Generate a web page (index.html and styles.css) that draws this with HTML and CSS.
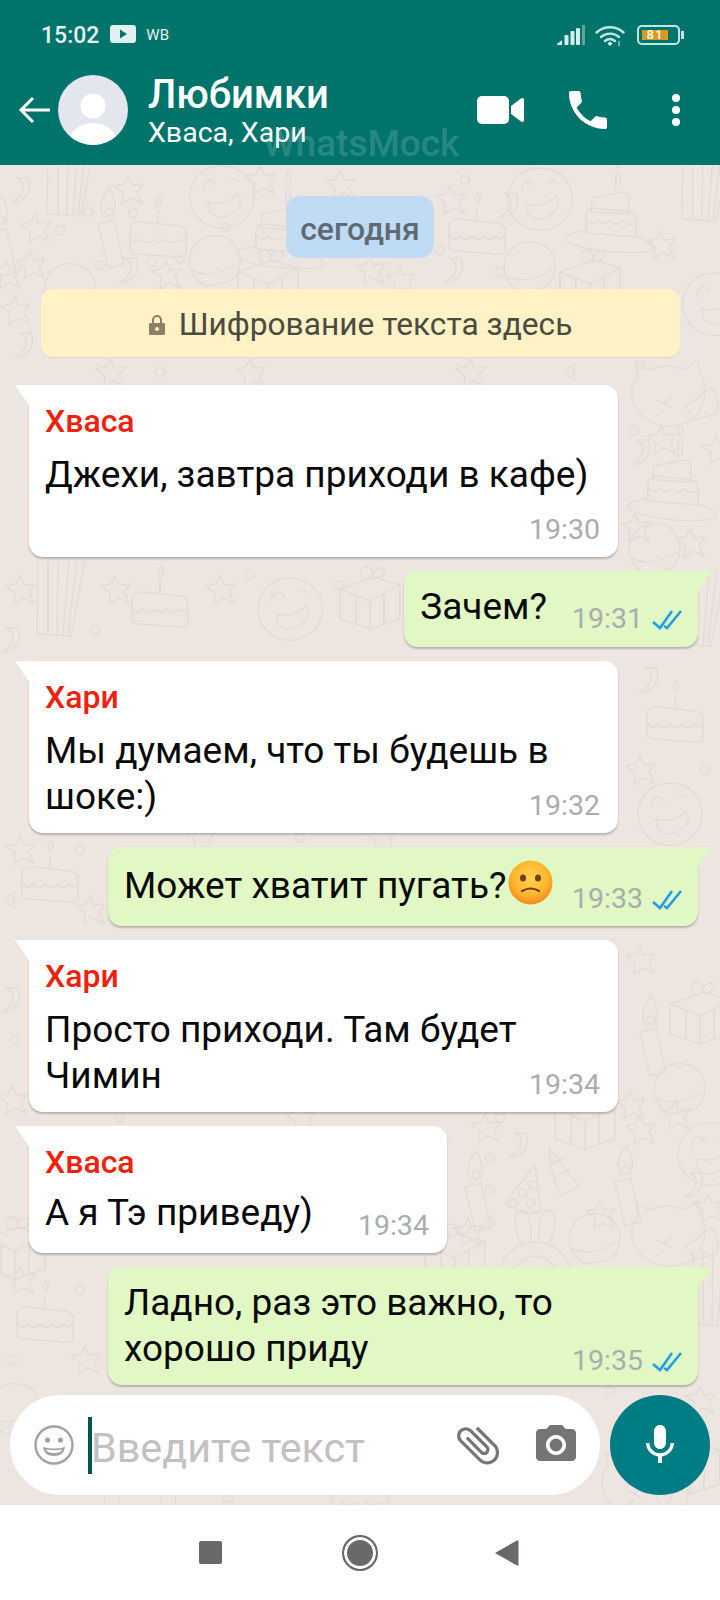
FILE: index.html
```html
<!DOCTYPE html>
<html lang="en">
<head>
    <meta charset="UTF-8">
    <meta name="viewport" content="width=device-width, initial-scale=1.0">
    <title>Любимки</title>
    <link rel="stylesheet" href="styles.css">
</head>
<body>

<div class="phone">
    <!-- Header -->
    <header class="header">
        <div class="statusbar">
            <span class="clock">15:02</span>
            <svg class="st-play" width="26" height="18" viewBox="0 0 26 18"><rect width="26" height="18" rx="3" fill="#e2f1f0"/><path d="M10 4.500l7 4.500-7 4.500z" fill="#00736b"/></svg>
            <span class="st-wb">WB</span>
            <span class="st-space"></span>
            <svg class="st-signal" width="28" height="20" viewBox="0 0 28 20"><g fill="#d5eeec"><path d="M0 19l5-4v5H0z"/><rect x="7.500" y="10" width="4" height="10" rx="1"/><rect x="13.500" y="6" width="4" height="14" rx="1"/><rect x="19" y="3" width="4" height="17" rx="1"/></g><rect x="25" y="0" width="3" height="20" fill="#57a6a0"/></svg>
            <svg class="st-wifi" width="30" height="22" viewBox="0 0 30 22"><g fill="none" stroke="#bfe6e3" stroke-width="2.400" stroke-linecap="round"><path d="M1.500 7.500C9 .5 21 .5 28.500 7.500"/><path d="M6 12c5.200-4.500 12.800-4.500 18 0"/><path d="M10 16c3-2.300 7-2.300 10 0"/></g><path d="M12.500 18.500l2.500-2 2.500 2-2.500 2.500z" fill="#e2f1f0"/><path d="M24 16v5" stroke="#8fcdc8" stroke-width="1.500"/></svg>
            <div class="battery">
                <div class="battery-body"><span class="battery-fill">81</span></div>
                <span class="battery-nub"></span>
            </div>
        </div>
        <div class="appbar">
            <svg class="back" width="32" height="32" viewBox="0 0 32 32"><path d="M32 16H3M15 4L3 16l12 12" fill="none" stroke="#fff" stroke-width="3"/></svg>
            <svg class="avatar" width="70" height="70" viewBox="0 0 70 70">
                <defs><clipPath id="av"><circle cx="35" cy="35" r="35"/></clipPath></defs>
                <circle cx="35" cy="35" r="35" fill="#e3e6ec"/>
                <circle cx="35" cy="31" r="12.500" fill="#fff"/>
                <ellipse cx="35" cy="68" rx="24" ry="20" fill="#fff" clip-path="url(#av)"/>
            </svg>
            <div class="chat-title">
                <div class="group-name">Любимки</div>
                <div class="group-members">Хваса, Хари</div>
            </div>
            <svg class="ic-video" width="47" height="28" viewBox="0 0 47 28"><rect width="32" height="28" rx="5" fill="#fff"/><path d="M34 10l10-7.500c1.500-1 3-.5 3 1.500v20c0 2-1.500 2.500-3 1.500L34 18z" fill="#fff"/></svg>
            <svg class="ic-call" width="38" height="38" viewBox="3 3 18 18"><path fill="#fff" d="M6.620 10.790c1.440 2.830 3.760 5.140 6.590 6.590l2.200-2.200c.27-.27.67-.36 1.020-.24 1.120.37 2.330.57 3.570.57.550 0 1 .45 1 1V20c0 .55-.45 1-1 1-9.390 0-17-7.610-17-17 0-.55.45-1 1-1h3.500c.55 0 1 .45 1 1 0 1.250.2 2.450.57 3.570.11.35.03.74-.25 1.020l-2.200 2.200z"/></svg>
            <div class="ic-more"><i></i><i></i><i></i></div>
        </div>
        <div class="watermark">WhatsMock</div>
    </header>

    <!-- Chat -->
    <main class="chat">
        <svg class="wallpaper" width="720" height="1340" viewBox="0 165 720 1340">
            <defs>
                <g id="cake"><path d="M-28 -8q4 -6 10 -5l38 4q8 1 8 8v18q0 6 -6 5l-44 -3q-6 0 -6 -6zM-28 3q6 8 11 1 6 7 12 0 6 7 12 0 6 7 12 0 6 6 9 -2M0 -12v-12M0 -28q-4 -5 1 -11 5 6 -1 11"/></g>
                <g id="hatcake"><path d="M-18 -24l30 -6q6 0 7 6v16l-38 -2zM-24 -8q2 -6 6 -6l38 4q6 1 6 7v18l-50 -4zM-24 -2q6 6 12 0 6 7 12 1 6 6 12 0 6 6 14 2M-24 8q-22 4 -20 10 8 8 46 12 40 2 42 -4 0 -6 -18 -12M6 -32v-14q0 -4 2 -4 2 0 2 4v12M8 -54q-5 -5 0 -12 6 7 0 12"/></g>
                <g id="gift"><path d="M-30 -16l34 -12 26 8v34l-30 10 -30 -10zM-30 -16l30 12 30 -16M0 -4v30M-14 -10v30M14 -11v30M-6 -26q-8 -12 4 -12 6 2 4 10 4 -12 12 -8 4 6 -10 10"/></g>
                <g id="stripes"><path d="M-22 -50l-1 74 34 2 14 -76M-12 -50v74M-2 -50l-1 74M9 -50l-6 74M17 -50l-9 74"/></g>
                <g id="candle"><path d="M-10 -8l16 -4 10 44 -16 4zM-3 -14q-10 -12 4 -30 10 14 4 28M-3 -20a4 4 0 1 0 8 0 4 4 0 1 0 -8 0"/></g>
                <g id="star"><path d="M0 -14l4 9 11 -1 -6 8 5 11 -11 -5 -9 6 1 -11 -9 -7 10 -2z"/></g>
                <g id="ring"><circle r="4.500"/></g>
                <g id="confetti"><path d="M-6 -12q10 4 6 14 -2 6 -10 10 6 2 14 -6 6 -8 2 -18z"/></g>
                <g id="face"><path d="M0 -32c22 0 34 18 32 34 -2 20 -20 30 -36 28 -18 -2 -30 -18 -28 -34 2 -16 14 -28 32 -28zM-18 -8q-2 -8 6 -10 6 0 6 6M8 -18q6 -4 10 2M-14 4q20 4 30 -8 6 10 -4 18 -14 10 -24 0z"/></g>
                <g id="burger"><path d="M-26 2c0 -24 18 -30 30 -28 16 2 24 16 20 32q-4 12 -12 14l-20 4q-14 -4 -18 -22zM-24 8q20 10 46 -6"/></g>
                <g id="cat"><path d="M-32 -24l-2 -12 14 6q18 -8 34 0l14 -10 2 14c10 16 4 44 -18 50 -24 8 -48 -8 -50 -28q-2 -10 6 -20zM-14 0l10 4M-14 16l8 -6M2 -4l-8 8 8 4M16 6l24 -18q12 6 6 26l-22 6z"/></g>
                <g id="bunny"><path d="M-36 30c0 -24 16 -38 36 -38s36 14 36 38M-14 -6c-8 -16 -8 -30 0 -34 10 0 10 18 10 32M14 -6c8 -16 8 -30 0 -34 -10 0 -10 18 -10 32M-22 30c0 -14 10 -24 22 -24s22 10 22 24"/></g>
                <g id="party"><path d="M0 -30l-30 38q16 14 36 8zM-12 -6a4 4 0 1 0 .1 0M-2 -14a4 4 0 1 0 .1 0M-4 4a4 4 0 1 0 .1 0M-22 4a4 4 0 1 0 .1 0"/></g>
                <g id="partyhat"><path d="M-16 -22l30 38 -18 10q-10 -18 -12 -48zM-16 -6l16 -6M-12 8l18 -10"/></g>
            </defs>
            <g fill="none" stroke="#e4dbd5" stroke-width="1.400">
                <use href="#stripes" x="70" y="190"/><use href="#star" x="128" y="190"/><use href="#star" x="35" y="228"/><use href="#star" x="30" y="265"/><use href="#star" x="6" y="275"/>
                <use href="#confetti" x="22" y="190"/><use href="#candle" x="108" y="232"/><use href="#cake" x="158" y="235"/><use href="#face" x="222" y="198"/>
                <use href="#hatcake" x="280" y="238"/><use href="#burger" x="215" y="262"/><use href="#gift" x="268" y="288"/><use href="#confetti" x="130" y="270"/><use href="#star" x="166" y="275"/>
                <use href="#burger" x="70" y="290"/><use href="#ring" x="60" y="230"/><use href="#ring" x="100" y="265"/><use href="#ring" x="152" y="262"/><use href="#ring" x="180" y="258"/><use href="#ring" x="225" y="227"/><use href="#ring" x="88" y="212"/><use href="#ring" x="133" y="213"/>
                <use href="#candle" x="0" y="240"/><use href="#star" x="260" y="180"/>
                <use href="#star" x="340" y="185"/><use href="#cake" x="477" y="232"/><use href="#face" x="540" y="200"/><use href="#hatcake" x="610" y="222"/><use href="#gift" x="590" y="288"/><use href="#stripes" x="705" y="195"/><use href="#burger" x="530" y="268"/>
                <use href="#star" x="450" y="200"/><use href="#star" x="660" y="245"/><use href="#face" x="715" y="305"/><use href="#ring" x="440" y="250"/><use href="#ring" x="500" y="272"/><use href="#confetti" x="455" y="270"/><use href="#confetti" x="510" y="205"/><use href="#star" x="400" y="280"/><use href="#star" x="370" y="270"/><use href="#ring" x="465" y="180"/>
                <use href="#confetti" x="25" y="345"/><use href="#star" x="15" y="310"/><use href="#star" x="110" y="373"/><use href="#star" x="250" y="373"/><use href="#star" x="470" y="373"/><use href="#ring" x="160" y="372"/><use href="#ring" x="570" y="372"/><use href="#ring" x="640" y="365"/>
                <use href="#cat" x="670" y="400"/><use href="#star" x="661" y="440"/><use href="#confetti" x="642" y="452"/><use href="#hatcake" x="672" y="490"/><use href="#ring" x="634" y="430"/><use href="#star" x="635" y="528"/><use href="#burger" x="655" y="550"/><use href="#star" x="690" y="543"/><use href="#star" x="716" y="450"/>
                <use href="#stripes" x="700" y="620"/><use href="#gift" x="370" y="605"/><use href="#stripes" x="60" y="610"/><use href="#face" x="290" y="610"/><use href="#cake" x="160" y="605"/><use href="#star" x="115" y="590"/><use href="#star" x="220" y="590"/><use href="#star" x="20" y="590"/><use href="#ring" x="340" y="585"/><use href="#ring" x="95" y="630"/><use href="#ring" x="250" y="575"/>
                <use href="#confetti" x="650" y="680"/><use href="#cake" x="675" y="720"/><use href="#star" x="640" y="770"/><use href="#ring" x="705" y="770"/><use href="#face" x="670" y="815"/><use href="#confetti" x="12" y="640"/>
                <use href="#cake" x="50" y="880"/><use href="#star" x="20" y="850"/><use href="#star" x="90" y="910"/><use href="#ring" x="10" y="900"/><use href="#ring" x="80" y="850"/><use href="#star" x="380" y="838"/><use href="#star" x="200" y="838"/><use href="#ring" x="300" y="838"/>
                <use href="#star" x="640" y="960"/><use href="#gift" x="700" y="1020"/><use href="#candle" x="650" y="1040"/><use href="#burger" x="680" y="1090"/><use href="#star" x="630" y="1105"/>
                <use href="#confetti" x="12" y="1000"/><use href="#star" x="12" y="1100"/><use href="#ring" x="15" y="1040"/><use href="#star" x="300" y="1118"/><use href="#ring" x="120" y="1118"/><use href="#ring" x="500" y="1118"/>
                <use href="#candle" x="475" y="1195"/><use href="#confetti" x="520" y="1145"/><use href="#partyhat" x="565" y="1170"/><use href="#party" x="535" y="1195"/><use href="#gift" x="585" y="1125"/><use href="#candle" x="625" y="1190"/><use href="#star" x="485" y="1128"/><use href="#star" x="640" y="1130"/><use href="#star" x="675" y="1115"/><use href="#confetti" x="695" y="1185"/><use href="#face" x="710" y="1155"/><use href="#star" x="600" y="1215"/><use href="#ring" x="490" y="1158"/><use href="#star" x="708" y="1208"/><use href="#ring" x="490" y="1190"/>
                <use href="#bunny" x="535" y="1250"/><use href="#burger" x="595" y="1240"/><use href="#cat" x="670" y="1240"/><use href="#star" x="468" y="1232"/><use href="#ring" x="490" y="1223"/><use href="#gift" x="455" y="1262"/>
                <use href="#cake" x="45" y="1320"/><use href="#star" x="20" y="1280"/><use href="#ring" x="80" y="1290"/><use href="#star" x="85" y="1360"/><use href="#stripes" x="715" y="1300"/><use href="#gift" x="15" y="1255"/><use href="#ring" x="12" y="1360"/>
                <use href="#burger" x="15" y="1410"/><use href="#bunny" x="140" y="1475"/><use href="#cat" x="640" y="1490"/><use href="#gift" x="690" y="1470"/><use href="#star" x="700" y="1400"/><use href="#cake" x="360" y="1498"/><use href="#ring" x="228" y="1498"/><use href="#ring" x="610" y="1390"/>
            </g>
        </svg>

        <div class="messages">
            <div class="date-pill">сегодня</div>
            <div class="notice">
                <svg width="16" height="20" viewBox="0 0 16 20"><path fill="#8a7f68" d="M3 8V5a5 5 0 0 1 10 0v3h1.500c.8 0 1.500.7 1.500 1.500v9c0 .8-.7 1.500-1.500 1.500h-13C.7 20 0 19.300 0 18.500v-9C0 8.700.7 8 1.500 8zm2 0h6V5a3 3 0 0 0-6 0z"/><circle cx="8" cy="14" r="2" fill="#fff2c4"/></svg>
                <span>Шифрование текста здесь</span>
            </div>

            <div class="bubble incoming">
                <div class="sender">Хваса</div>
                <div class="text">Джехи, завтра приходи в кафе)<span class="time">19:30</span></div>
            </div>
            <div class="bubble outgoing">
                <div class="text">Зачем?<span class="time">19:31<svg class="ticks" width="30" height="20" viewBox="0 0 30 20"><path d="M1 12l7 6L20 1M12 16l3 2L29 1" fill="none" stroke="#1f9fe8" stroke-width="2.600"/></svg></span></div>
            </div>
            <div class="bubble incoming">
                <div class="sender">Хари</div>
                <div class="text">Мы думаем, что ты будешь в шоке:)<span class="time">19:32</span></div>
            </div>
            <div class="bubble outgoing emoji-row">
                <div class="text">Может хватит пугать?<svg class="emoji" width="45" height="45" viewBox="0 0 45 45">
                    <defs><radialGradient id="emo" cx="50%" cy="38%" r="62%"><stop offset="0%" stop-color="#ffd34d"/><stop offset="65%" stop-color="#fdb52e"/><stop offset="100%" stop-color="#f38a1c"/></radialGradient></defs>
                    <circle cx="22.500" cy="22.500" r="22" fill="url(#emo)"/>
                    <ellipse cx="15" cy="18" rx="3" ry="3.600" fill="#70401a"/><ellipse cx="30" cy="18" rx="3" ry="3.600" fill="#70401a"/>
                    <path d="M14 31q9-5 17 0" fill="none" stroke="#70401a" stroke-width="2.200" stroke-linecap="round"/>
                </svg><span class="time">19:33<svg class="ticks" width="30" height="20" viewBox="0 0 30 20"><path d="M1 12l7 6L20 1M12 16l3 2L29 1" fill="none" stroke="#1f9fe8" stroke-width="2.600"/></svg></span></div>
            </div>
            <div class="bubble incoming">
                <div class="sender">Хари</div>
                <div class="text">Просто приходи. Там будет Чимин<span class="time">19:34</span></div>
            </div>
            <div class="bubble incoming short">
                <div class="sender">Хваса</div>
                <div class="text">А я Тэ приведу)<span class="time">19:34</span></div>
            </div>
            <div class="bubble outgoing wide">
                <div class="text">Ладно, раз это важно, то<br>хорошо приду<span class="time">19:35<svg class="ticks" width="30" height="20" viewBox="0 0 30 20"><path d="M1 12l7 6L20 1M12 16l3 2L29 1" fill="none" stroke="#1f9fe8" stroke-width="2.600"/></svg></span></div>
            </div>
        </div>

        <!-- Composer -->
        <div class="composer">
            <div class="input-box">
                <svg class="ic-smile" width="40" height="40" viewBox="0 0 40 40"><circle cx="20" cy="20" r="18.500" fill="none" stroke="#a3a1a3" stroke-width="2.400"/><circle cx="13.500" cy="15" r="2.600" fill="#a3a1a3"/><circle cx="26.500" cy="15" r="2.600" fill="#a3a1a3"/><path d="M9 22q11 3 22 0-1 9-11 9T9 22z" fill="#a3a1a3"/><path d="M12 24.500q8 1.500 16 0-1 3.500-8 3.500t-8-3.500z" fill="#fff"/></svg>
                <span class="caret"></span>
                <span class="placeholder">Введите текст</span>
                <svg class="ic-clip" width="52" height="52" viewBox="0 0 24 24"><path fill="#777477" transform="rotate(-45 12 12)" d="M16.500 6v11.500c0 2.210-1.790 4-4 4s-4-1.790-4-4V5c0-1.380 1.120-2.500 2.500-2.500s2.500 1.120 2.500 2.500v10.500c0 .55-.45 1-1 1s-1-.45-1-1V6H10v9.500c0 1.380 1.120 2.500 2.500 2.500s2.500-1.120 2.500-2.500V5c0-2.210-1.790-4-4-4S7 2.790 7 5v12.500c0 3.040 2.460 5.500 5.500 5.500s5.500-2.460 5.500-5.500V6h-1.500z"/></svg>
                <svg class="ic-camera" width="48" height="48" viewBox="0 0 24 24"><path fill="#777477" d="M12 15.200a3.200 3.200 0 1 0 0-6.400 3.200 3.200 0 0 0 0 6.400z"/><path fill="#777477" d="M9 2L7.170 4H4c-1.100 0-2 .9-2 2v12c0 1.100.9 2 2 2h16c1.100 0 2-.9 2-2V6c0-1.100-.9-2-2-2h-3.170L15 2H9zm3 15c-2.760 0-5-2.240-5-5s2.240-5 5-5 5 2.240 5 5-2.240 5-5 5z"/></svg>
            </div>
            <div class="mic-btn">
                <svg width="48" height="48" viewBox="0 0 24 24"><path fill="#fff" d="M12 14c1.660 0 2.990-1.340 2.990-3L15 5c0-1.660-1.340-3-3-3S9 3.340 9 5v6c0 1.660 1.340 3 3 3zm5.300-3c0 3-2.540 5.100-5.300 5.100S6.700 14 6.700 11H5c0 3.410 2.720 6.230 6 6.720V21h2v-3.280c3.280-.48 6-3.300 6-6.720h-1.700z"/></svg>
            </div>
        </div>
    </main>

    <!-- Android nav -->
    <nav class="navbar">
        <span class="nav-square"></span>
        <span class="nav-circle"></span>
        <svg width="24" height="26" viewBox="0 0 24 26"><path d="M0 13L22 .5q1.500-.5 1.500 1v23q0 1.500-1.500 1z" fill="#6b686a"/></svg>
    </nav>
</div>

</body>
</html>
```
FILE: styles.css
```css
* {
    box-sizing: border-box;
}
body {
    font-family: Roboto, "Noto Sans", sans-serif;
    margin: 0;
    padding: 0;
    background-color: #fff;
}
.phone {
    width: 720px;
    height: 1600px;
    display: flex;
    flex-direction: column;
    overflow: hidden;
}

/* header */
.header {
    position: relative;
    height: 165px;
    background-color: #00736b;
    color: white;
    flex: none;
}
.statusbar {
    height: 70px;
    padding: 25px 36px 0 41px;
    display: flex;
    align-items: flex-start;
}
.clock {
    font-size: 23px;
    font-weight: 500;
    line-height: 22px;
    color: #e2f1f0;
}
.st-play {
    margin: 0 0 0 11px;
}
.st-wb {
    font-size: 15px;
    line-height: 20px;
    margin-left: 10px;
    color: #e2f1f0;
}
.st-space {
    flex: 1;
}
.st-wifi {
    margin: 0 0 0 10px;
}
.battery {
    display: flex;
    align-items: center;
    margin: 0 0 0 12px;
}
.battery-body {
    width: 43px;
    height: 20px;
    border: 2px solid #bfe6e3;
    border-radius: 5px;
    padding: 3px;
}
.battery-fill {
    display: block;
    width: 26px;
    height: 10px;
    background-color: #d39a24;
    color: #fff3d0;
    font-size: 13px;
    font-weight: 700;
    line-height: 10px;
    text-align: center;
    letter-spacing: 1px;
}
.battery-nub {
    width: 3px;
    height: 8px;
    margin-left: 1px;
    background-color: #bfe6e3;
}
.appbar {
    display: flex;
    align-items: center;
    height: 80px;
    padding-left: 18px;
}
.avatar {
    margin-left: 8px;
    flex: none;
}
.chat-title {
    margin-left: 20px;
    width: 329px;
    padding-top: 3px;
}
.group-name {
    font-size: 40px;
    font-weight: 500;
    line-height: 43px;
}
.group-members {
    font-size: 28.500px;
    line-height: 34px;
}
.ic-call {
    margin-left: 45px;
}
.ic-more {
    margin-left: 65px;
    display: flex;
    flex-direction: column;
    gap: 4px;
}
.ic-more i {
    display: block;
    width: 8px;
    height: 8px;
    border-radius: 50%;
    background-color: #fff;
}
.watermark {
    position: absolute;
    left: 263px;
    top: 122px;
    font-size: 37px;
    font-weight: 500;
    line-height: 44px;
    color: rgba(255, 255, 255, 0.17);
}

/* chat area */
.chat {
    position: relative;
    flex: 1;
    min-height: 0;
    background-color: #ede5e0;
    display: flex;
    flex-direction: column;
}
.wallpaper {
    position: absolute;
    left: 0;
    top: 0;
}
.messages {
    position: relative;
    flex: 1;
    padding: 31px 22px 0 29px;
    display: flex;
    flex-direction: column;
    align-items: flex-start;
}
.date-pill {
    align-self: center;
    margin-left: -7px;
    height: 62px;
    width: 148px;
    padding-top: 4px;
    background-color: #bfdcf4;
    border-radius: 14px;
    color: #5f6a75;
    font-size: 32px;
    font-weight: 500;
    display: flex;
    align-items: center;
    justify-content: center;
}
.notice {
    margin: 31px 0 28px 12px;
    width: 639px;
    height: 68px;
    padding-top: 3px;
    background-color: #fef2c6;
    border-radius: 12px;
    color: #4d4a40;
    font-size: 31.700px;
    display: flex;
    align-items: center;
    justify-content: center;
    gap: 14px;
    box-shadow: 0 1px 1px rgba(0, 0, 0, 0.06);
}
.bubble {
    position: relative;
    background-color: white;
    border-radius: 14px;
    padding: 14px 18px 7px 16px;
    margin-bottom: 14px;
    max-width: 589px;
    box-shadow: 0 2px 2px rgba(0, 0, 0, 0.22);
}
.bubble.short {
    padding-bottom: 7px;
}
.bubble.short .sender {
    margin-bottom: 6px;
}
.bubble.short .time {
    margin-top: 16px;
}
.bubble.incoming {
    border-top-left-radius: 0;
}
.bubble.incoming::before {
    content: "";
    position: absolute;
    left: -14px;
    top: 0;
    width: 15px;
    height: 22px;
    background-color: white;
    clip-path: polygon(0 0, 100% 0, 100% 100%);
}
.bubble.outgoing {
    align-self: flex-end;
    background-color: #e1f7c4;
    border-top-right-radius: 0;
    padding: 13px 16px 8px 16px;
}
.bubble.outgoing::before {
    content: "";
    position: absolute;
    right: -14px;
    top: 0;
    width: 15px;
    height: 22px;
    background-color: #e1f7c4;
    clip-path: polygon(0 0, 100% 0, 0 100%);
}
.bubble.wide {
    width: 590px;
    max-width: none;
    padding-bottom: 4px;
    margin-bottom: 10px;
}
.bubble.emoji-row {
    width: 590px;
    max-width: none;
    padding-bottom: 7px;
}
.sender {
    font-size: 32px;
    font-weight: 500;
    line-height: 44px;
    margin-bottom: 9px;
    color: #f0210c;
}
.text {
    font-size: 37px;
    line-height: 46px;
    color: #0a0a0a;
    display: flow-root;
}
.time {
    float: right;
    margin: 12px 0 0 45px;
    font-size: 28.500px;
    line-height: 40px;
    color: #a9adad;
}
.outgoing .time {
    margin: 15px 0 0 25px;
    display: flex;
    align-items: center;
    gap: 9px;
}
.ticks {
    margin-top: 2px;
}
.emoji {
    vertical-align: -7px;
    margin-left: 2px;
}
.emoji-row .time {
    margin-top: 19px;
    margin-left: 10px;
}

/* composer */
.composer {
    position: relative;
    display: flex;
    gap: 10px;
    padding: 0 10px 11px;
}
.input-box {
    flex: 1;
    height: 100px;
    background-color: white;
    border-radius: 50px;
    display: flex;
    align-items: center;
    padding-left: 24px;
}
.caret {
    width: 4px;
    height: 57px;
    background-color: #00574f;
    margin-left: 14px;
}
.placeholder {
    width: 361px;
    margin-left: -1px;
    padding-top: 5px;
    font-size: 41.300px;
    color: #c4c0c0;
}
.ic-camera {
    margin-left: 28px;
}
.mic-btn {
    width: 100px;
    height: 100px;
    border-radius: 50%;
    background-color: #007c85;
    display: flex;
    align-items: center;
    justify-content: center;
}

/* bottom nav */
.navbar {
    height: 95px;
    flex: none;
    background-color: #fff;
    display: flex;
    align-items: center;
    padding: 0 0 0 199px;
}
.nav-square {
    width: 23px;
    height: 23px;
    border-radius: 2px;
    background-color: #6b686a;
}
.nav-circle {
    width: 36px;
    height: 36px;
    margin-left: 120px;
    margin-right: 117px;
    border-radius: 50%;
    background-color: #6b686a;
    border: 2px solid #6b686a;
    box-shadow: inset 0 0 0 3px #fff;
}
```
